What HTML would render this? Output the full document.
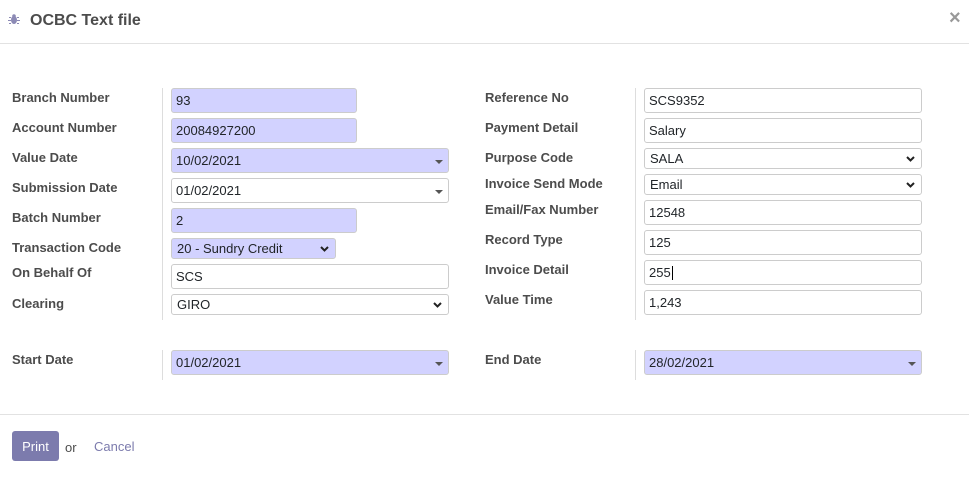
<!DOCTYPE html>
<html><head><meta charset="utf-8"><style>
*{box-sizing:border-box;margin:0;padding:0}
body{width:969px;height:477px;background:#fff;font-family:"Liberation Sans",sans-serif;position:relative;overflow:hidden;color:#4c4c4c}
.a{position:absolute}
.l{position:absolute;font-size:13px;font-weight:bold;color:#4c4c4c;line-height:16px}
.f{position:absolute;border:1px solid #ccc;border-radius:3px;font-size:13px;color:#212529;padding-left:4px;background:#fff;display:flex;align-items:center}
.r{background:#d2d2ff}
.d{position:absolute;width:1px;background:#ddd}
.c::after{content:"";position:absolute;right:5px;top:50%;margin-top:-1px;border-left:4px solid transparent;border-right:4px solid transparent;border-top:4px solid #555}
.s svg{position:absolute;right:6px;top:50%;margin-top:-3px}
</style></head><body>
<svg class="a" style="left:8px;top:13px" width="12" height="12" viewBox="0 0 12 12"><g fill="#8c8ab5"><ellipse cx="6" cy="7" rx="3" ry="4"/><circle cx="6" cy="3" r="1.8"/><path d="M1 4h2v1H1zM9 4h2v1H9zM0 7h3v1H0zM9 7h3v1H9zM1 10h2v1H1zM9 10h2v1H9z"/></g></svg>
<div class="a" style="left:30px;top:12px;font-size:16px;font-weight:bold;color:#4c4c4c">OCBC Text file</div>
<div class="a" style="left:949px;top:7px;font-size:20px;font-weight:bold;color:#999">×</div>
<div class="a" style="left:0;top:43px;width:969px;height:1px;background:#e2e2e2"></div>

<div class="d" style="left:162px;top:88px;height:232px"></div>
<div class="d" style="left:635px;top:88px;height:232px"></div>
<div class="d" style="left:162px;top:350px;height:30px"></div>
<div class="d" style="left:635px;top:350px;height:30px"></div>

<div class="l" style="left:12px;top:90px">Branch Number</div>
<div class="l" style="left:12px;top:120px">Account Number</div>
<div class="l" style="left:12px;top:150px">Value Date</div>
<div class="l" style="left:12px;top:180px">Submission Date</div>
<div class="l" style="left:12px;top:210px">Batch Number</div>
<div class="l" style="left:12px;top:240px">Transaction Code</div>
<div class="l" style="left:12px;top:265px">On Behalf Of</div>
<div class="l" style="left:12px;top:296px">Clearing</div>
<div class="l" style="left:12px;top:352px">Start Date</div>

<div class="f r" style="left:171px;top:88px;width:186px;height:25px">93</div>
<div class="f r" style="left:171px;top:118px;width:186px;height:25px">20084927200</div>
<div class="f r c" style="left:171px;top:148px;width:278px;height:25px">10/02/2021</div>
<div class="f c" style="left:171px;top:178px;width:278px;height:25px">01/02/2021</div>
<div class="f r" style="left:171px;top:208px;width:186px;height:25px">2</div>
<div class="f r s" style="left:171px;top:238px;width:165px;height:21px;padding-left:5px">20 - Sundry Credit<svg width="9" height="6"><path d="M1 1l3.5 3.5L8 1" stroke="#222" stroke-width="2" fill="none"/></svg></div>
<div class="f" style="left:171px;top:264px;width:278px;height:25px">SCS</div>
<div class="f s" style="left:171px;top:294px;width:278px;height:21px;padding-left:5px">GIRO<svg width="9" height="6"><path d="M1 1l3.5 3.5L8 1" stroke="#222" stroke-width="2" fill="none"/></svg></div>
<div class="f r c" style="left:171px;top:350px;width:278px;height:25px">01/02/2021</div>

<div class="l" style="left:485px;top:90px">Reference No</div>
<div class="l" style="left:485px;top:120px">Payment Detail</div>
<div class="l" style="left:485px;top:150px">Purpose Code</div>
<div class="l" style="left:485px;top:176px">Invoice Send Mode</div>
<div class="l" style="left:485px;top:202px">Email/Fax Number</div>
<div class="l" style="left:485px;top:232px">Record Type</div>
<div class="l" style="left:485px;top:262px">Invoice Detail</div>
<div class="l" style="left:485px;top:292px">Value Time</div>
<div class="l" style="left:485px;top:352px">End Date</div>

<div class="f" style="left:644px;top:88px;width:278px;height:25px">SCS9352</div>
<div class="f" style="left:644px;top:118px;width:278px;height:25px">Salary</div>
<div class="f s" style="left:644px;top:148px;width:278px;height:21px;padding-left:5px">SALA<svg width="9" height="6"><path d="M1 1l3.5 3.5L8 1" stroke="#222" stroke-width="2" fill="none"/></svg></div>
<div class="f s" style="left:644px;top:174px;width:278px;height:21px;padding-left:5px">Email<svg width="9" height="6"><path d="M1 1l3.5 3.5L8 1" stroke="#222" stroke-width="2" fill="none"/></svg></div>
<div class="f" style="left:644px;top:200px;width:278px;height:25px">12548</div>
<div class="f" style="left:644px;top:230px;width:278px;height:25px">125</div>
<div class="f" style="left:644px;top:260px;width:278px;height:25px">255<span style="display:inline-block;width:1px;height:14px;background:#000;margin-left:1px"></span></div>
<div class="f" style="left:644px;top:290px;width:278px;height:25px">1,243</div>
<div class="f r c" style="left:644px;top:350px;width:278px;height:25px">28/02/2021</div>

<div class="a" style="left:0;top:414px;width:969px;height:1px;background:#e2e2e2"></div>
<div class="a" style="left:12px;top:431px;width:47px;height:30px;background:#7c7bad;border-radius:3px;color:#fff;font-size:13px;display:flex;align-items:center;justify-content:center">Print</div>
<div class="a" style="left:65px;top:440px;font-size:13px;color:#4c4c4c">or</div>
<div class="a" style="left:94px;top:439px;font-size:13px;color:#7c7bad">Cancel</div>
</body></html>
